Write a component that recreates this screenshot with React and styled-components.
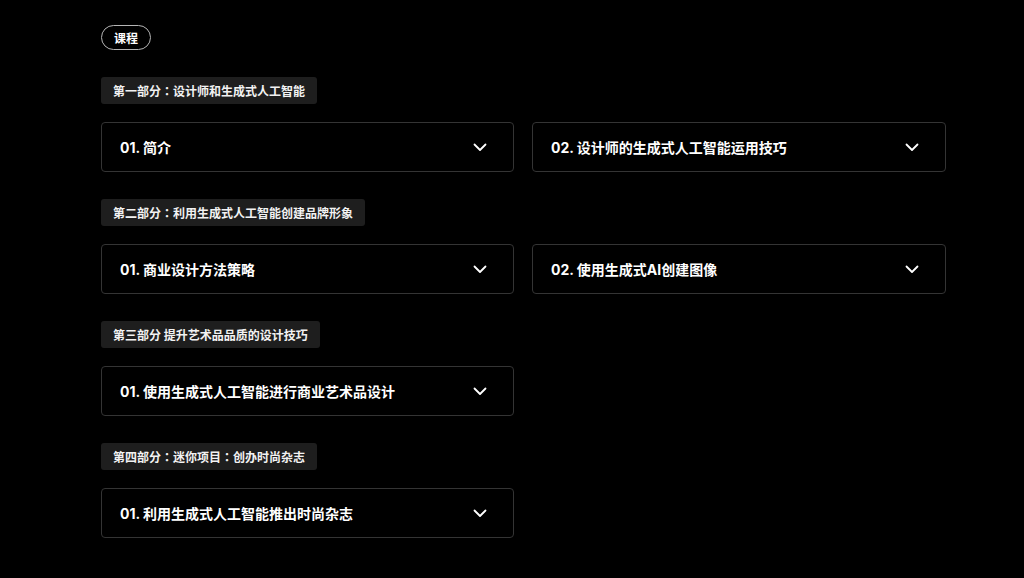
import React from "react"
import styled, { createGlobalStyle } from "styled-components"

const GlobalStyle = createGlobalStyle`
  html, body {
    margin: 0;
    padding: 0;
    background: #000;
  }
  body {
    font-family: "Inter", "Noto Sans CJK SC", sans-serif;
    color: #fff;
  }
`

const Page = styled.div`
  width: 845px;
  padding: 25px 0 40px 101px;
  display: flex;
  flex-direction: column;
  align-items: flex-start;
`

const Pill = styled.div`
  height: 25px;
  box-sizing: border-box;
  padding: 0 12px;
  border: 1.5px solid #b5b5b5;
  border-radius: 13px;
  display: flex;
  align-items: center;
  font-size: 12px;
  font-weight: 700;
  margin-bottom: 27px;
`

const Section = styled.section`
  width: 100%;
  display: flex;
  flex-direction: column;
  align-items: flex-start;
  gap: 18px;
  margin-bottom: 27px;
`

const Label = styled.div`
  height: 27px;
  padding: 0 12px;
  display: flex;
  align-items: center;
  background: #1e1e1e;
  border-radius: 3px;
  font-size: 12px;
  font-weight: 700;
  color: #f2f2f2;
`

// the reference draws the full-width colon centred in its cell
const Colon = styled.span`
  font-family: "Noto Sans CJK TC", sans-serif;
`

const Grid = styled.div`
  width: 100%;
  display: grid;
  grid-template-columns: 413px 1fr;
  gap: 18px;
`

const Card = styled.div`
  height: 50px;
  box-sizing: border-box;
  border: 1px solid #343434;
  border-radius: 4px;
  display: flex;
  align-items: center;
  justify-content: space-between;
  padding: 0 26px 0 18px;
`

const Title = styled.span`
  font-size: 14px;
  font-weight: 700;
  color: #fff;
`

const Chevron = () => (
  <svg width="14" height="14" viewBox="0 0 14 14" fill="none">
    <path d="M1.5 4.5 L7 10 L12.5 4.5" stroke="#fff" strokeWidth="1.8" strokeLinecap="round" strokeLinejoin="round" />
  </svg>
)

const sections = [
  { label: "第一部分：设计师和生成式人工智能", items: ["01. 简介", "02. 设计师的生成式人工智能运用技巧"] },
  { label: "第二部分：利用生成式人工智能创建品牌形象", items: ["01. 商业设计方法策略", "02. 使用生成式AI创建图像"] },
  { label: "第三部分 提升艺术品品质的设计技巧", items: ["01. 使用生成式人工智能进行商业艺术品设计"] },
  { label: "第四部分：迷你项目：创办时尚杂志", items: ["01. 利用生成式人工智能推出时尚杂志"] },
]

const withColons = (text) =>
  text.split("：").flatMap((part, i) => (i === 0 ? [part] : [<Colon key={i}>：</Colon>, part]))

const App = () => {
  return (
    <>
      <GlobalStyle />
      <Page>
        <Pill>课程</Pill>
        {sections.map((s) => (
          <Section key={s.label}>
            <Label>{withColons(s.label)}</Label>
            <Grid>
              {s.items.map((it) => (
                <Card key={it}>
                  <Title>{it}</Title>
                  <Chevron />
                </Card>
              ))}
            </Grid>
          </Section>
        ))}
      </Page>
    </>
  )
}

export default App
